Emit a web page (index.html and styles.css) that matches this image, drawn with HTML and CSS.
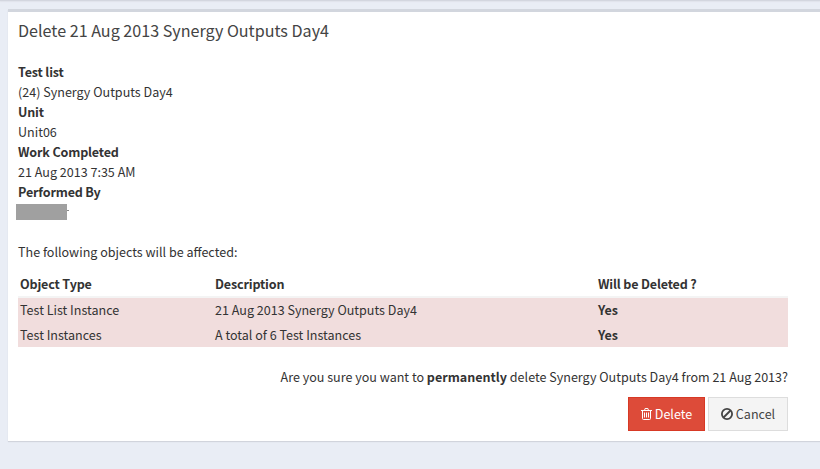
FILE: index.html
```
<!DOCTYPE html>
<html lang="en">
<head>
<meta charset="utf-8">
<title>Delete Synergy Outputs Day4</title>
<link rel="stylesheet" href="styles.css">
</head>
<body>
<div class="topline"></div>
<main class="box">
  <h1 class="title">Delete 21 Aug 2013 Synergy Outputs Day4</h1>
  <dl class="details">
    <dt>Test list</dt><dd>(24) Synergy Outputs Day4</dd>
    <dt>Unit</dt><dd>Unit06</dd>
    <dt>Work Completed</dt><dd>21 Aug 2013 7:35 AM</dd>
    <dt>Performed By</dt><dd class="redacted"><span class="mask"></span><span class="tick"></span></dd>
  </dl>
  <p class="intro">The following objects will be affected:</p>
  <table class="objects">
    <colgroup><col class="c-type"><col class="c-desc"><col></colgroup>
    <thead><tr><th>Object Type</th><th>Description</th><th>Will be Deleted ?</th></tr></thead>
    <tbody>
      <tr><td>Test List Instance</td><td>21 Aug 2013 Synergy Outputs Day4</td><td><b>Yes</b></td></tr>
      <tr><td>Test Instances</td><td>A total of 6 Test Instances</td><td><b>Yes</b></td></tr>
    </tbody>
  </table>
  <p class="confirm">Are you sure you want to <b>permanently</b> delete Synergy Outputs Day4 from 21 Aug 2013?</p>
  <div class="actions">
    <button class="btn danger"><svg width="11" height="12" viewBox="0 0 11 12" fill="none" stroke="currentColor"><path d="M0 2.5h11M3.5 2.5l.6-2h2.8l.6 2M1.5 2.5v8q0 1 1 1h6q1 0 1-1v-8M3.5 4.5v5M5.5 4.5v5M7.5 4.5v5"/></svg><span>Delete</span></button>
    <button class="btn plain"><svg width="12" height="12" viewBox="0 0 12 12" fill="none" stroke="currentColor" stroke-width="1.8"><circle cx="6" cy="6" r="5.1"/><path d="M2.5 9.5l7-7"/></svg><span>Cancel</span></button>
  </div>
</main>
</body>
</html>
```
FILE: styles.css
```
* { box-sizing: border-box; }
body {
  margin: 0;
  height: 469px;
  overflow: hidden;
  background: #e9edf5;
  color: #333;
  font: 12.55px/20px "Noto Sans CJK SC", sans-serif;
}
.topline { height: 1px; background: #d3d6df; box-shadow: 0 1px 1px #dfe2ea; margin-bottom: 8px; }
.box {
  height: 432px;
  margin-left: 8px;
  padding: 9px 32px 0 10px;
  background: #fff;
  border-top: 3px solid #d2d6de;
  box-shadow: 0 1px 1px rgba(0, 0, 0, .1);
}
.title { margin: 0 0 23px; font-size: 16.13px; line-height: 18px; font-weight: 400; color: #444; }
.details { margin: 0 0 20px; }
dt, th { font-weight: 700; letter-spacing: -.16px; }
dd { margin: 0; }
.redacted { display: flex; height: 20px; padding-top: 2px; }
.mask { width: 51px; height: 16px; margin-left: -2px; background: #a0a0a0; }
.tick { width: 2px; height: 1px; margin-top: 6px; background: #888; }
p { margin: 0; }
.intro { margin-bottom: 10px; }
.objects { width: 770px; table-layout: fixed; border-collapse: separate; border-spacing: 0; }
.c-type { width: 195px; }
.c-desc { width: 383px; }
th, td { text-align: left; padding: 0 2px; }
th { height: 26px; padding-bottom: 2px; border-bottom: 2px solid #f4f4f4; padding-top: 2px; }
td { height: 25px; background: #f1dddd; }
tbody tr:first-child td { height: 24px; }
tbody tr:last-child td { padding-top: 1px; }
.confirm { margin-top: 20px; text-align: right; }
.actions { display: flex; justify-content: flex-end; gap: 3px; margin-top: 10px; }
.btn {
  display: flex;
  align-items: center;
  justify-content: center;
  gap: 3px;
  height: 34px;
  padding: 0;
  border: 1px solid;
  border-radius: 0;
  font: inherit;
}
.danger { width: 77px; color: #fff; background: #dd4b39; border-color: #d73925; }
.plain { width: 80px; color: #444; background: #f4f4f4; border-color: #ddd; }
```
